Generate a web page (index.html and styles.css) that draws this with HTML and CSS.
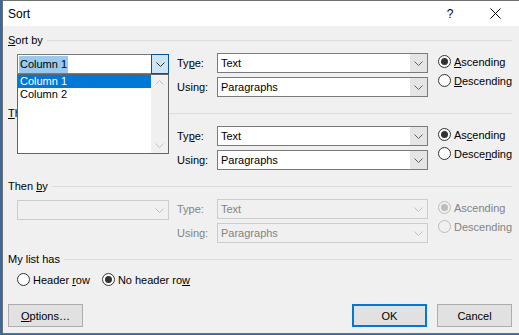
FILE: index.html
```html
<!DOCTYPE html>
<html lang="en">
<head>
    <meta charset="UTF-8">
    <title>Sort</title>
    <link rel="stylesheet" href="styles.css">
</head>
<body>
    <div class="dialog">
        <!-- Title bar -->
        <div class="titlebar">
            <span class="title">Sort</span>
            <span class="tb-btn help">?</span>
            <span class="tb-btn close">
                <svg width="11" height="11" viewBox="0 0 11 11"><path d="M0.5 0.5 L10.5 10.5 M10.5 0.5 L0.5 10.5" stroke="#000" stroke-width="1" fill="none"/></svg>
            </span>
        </div>

        <div class="content">
            <!-- Sort by -->
            <div class="group">
                <div class="group-head"><span><u>S</u>ort by</span><div class="rule"></div></div>
                <div class="group-body">
                    <div class="key">
                        <div class="combo focused">
                            <span class="value"><span class="sel">Column 1</span></span>
                            <span class="arrow">
                                <svg width="9" height="5" viewBox="0 0 9 5"><polyline points="0.5,0.5 4.5,4.5 8.5,0.5" fill="none" stroke="#333" stroke-width="1"/></svg>
                            </span>
                        </div>
                        <div class="droplist">
                            <div class="items">
                                <div class="item selected">Column 1</div>
                                <div class="item">Column 2</div>
                            </div>
                            <div class="scrollbar">
                                <svg width="9" height="5" viewBox="0 0 9 5"><polyline points="0.5,4.5 4.5,0.5 8.5,4.5" fill="none" stroke="#c2c2c2" stroke-width="1"/></svg>
                                <svg width="9" height="5" viewBox="0 0 9 5"><polyline points="0.5,0.5 4.5,4.5 8.5,0.5" fill="none" stroke="#c2c2c2" stroke-width="1"/></svg>
                            </div>
                        </div>
                    </div>
                    <div class="fields">
                        <div class="field">
                            <span class="label">Ty<u>p</u>e:</span>
                            <div class="combo">
                                <span class="value">Text</span>
                                <span class="arrow"><svg width="9" height="5" viewBox="0 0 9 5"><polyline points="0.5,0.5 4.5,4.5 8.5,0.5" fill="none" stroke="#606060" stroke-width="1"/></svg></span>
                            </div>
                        </div>
                        <div class="field">
                            <span class="label">Using:</span>
                            <div class="combo">
                                <span class="value">Paragraphs</span>
                                <span class="arrow"><svg width="9" height="5" viewBox="0 0 9 5"><polyline points="0.5,0.5 4.5,4.5 8.5,0.5" fill="none" stroke="#606060" stroke-width="1"/></svg></span>
                            </div>
                        </div>
                    </div>
                    <div class="order">
                        <label class="radio"><span class="dot checked"></span><span><u>A</u>scending</span></label>
                        <label class="radio"><span class="dot"></span><span><u>D</u>escending</span></label>
                    </div>
                </div>
            </div>

            <!-- Then by -->
            <div class="group">
                <div class="group-head"><span><u>T</u>hen by</span><div class="rule"></div></div>
                <div class="group-body">
                    <div class="key">
                        <div class="combo">
                            <span class="value"></span>
                            <span class="arrow"><svg width="9" height="5" viewBox="0 0 9 5"><polyline points="0.5,0.5 4.5,4.5 8.5,0.5" fill="none" stroke="#606060" stroke-width="1"/></svg></span>
                        </div>
                    </div>
                    <div class="fields">
                        <div class="field">
                            <span class="label">Ty<u>p</u>e:</span>
                            <div class="combo">
                                <span class="value">Text</span>
                                <span class="arrow"><svg width="9" height="5" viewBox="0 0 9 5"><polyline points="0.5,0.5 4.5,4.5 8.5,0.5" fill="none" stroke="#606060" stroke-width="1"/></svg></span>
                            </div>
                        </div>
                        <div class="field">
                            <span class="label">Using:</span>
                            <div class="combo">
                                <span class="value">Paragraphs</span>
                                <span class="arrow"><svg width="9" height="5" viewBox="0 0 9 5"><polyline points="0.5,0.5 4.5,4.5 8.5,0.5" fill="none" stroke="#606060" stroke-width="1"/></svg></span>
                            </div>
                        </div>
                    </div>
                    <div class="order">
                        <label class="radio"><span class="dot checked"></span><span>As<u>c</u>ending</span></label>
                        <label class="radio"><span class="dot"></span><span>Desce<u>n</u>ding</span></label>
                    </div>
                </div>
            </div>

            <!-- Then by (disabled) -->
            <div class="group disabled">
                <div class="group-head"><span>Then <u>b</u>y</span><div class="rule"></div></div>
                <div class="group-body">
                    <div class="key">
                        <div class="combo">
                            <span class="value"></span>
                            <span class="arrow"><svg width="9" height="5" viewBox="0 0 9 5"><polyline points="0.5,0.5 4.5,4.5 8.5,0.5" fill="none" stroke="#bfbfbf" stroke-width="1"/></svg></span>
                        </div>
                    </div>
                    <div class="fields">
                        <div class="field">
                            <span class="label">Type:</span>
                            <div class="combo">
                                <span class="value">Text</span>
                                <span class="arrow"><svg width="9" height="5" viewBox="0 0 9 5"><polyline points="0.5,0.5 4.5,4.5 8.5,0.5" fill="none" stroke="#bfbfbf" stroke-width="1"/></svg></span>
                            </div>
                        </div>
                        <div class="field">
                            <span class="label">Using:</span>
                            <div class="combo">
                                <span class="value">Paragraphs</span>
                                <span class="arrow"><svg width="9" height="5" viewBox="0 0 9 5"><polyline points="0.5,0.5 4.5,4.5 8.5,0.5" fill="none" stroke="#bfbfbf" stroke-width="1"/></svg></span>
                            </div>
                        </div>
                    </div>
                    <div class="order">
                        <label class="radio"><span class="dot checked"></span><span>Ascending</span></label>
                        <label class="radio"><span class="dot"></span><span>Descending</span></label>
                    </div>
                </div>
            </div>

            <!-- My list has -->
            <div class="group">
                <div class="group-head"><span>My list has</span><div class="rule"></div></div>
                <div class="list-has">
                    <label class="radio"><span class="dot"></span><span>Header <u>r</u>ow</span></label>
                    <label class="radio"><span class="dot checked"></span><span>No header ro<u>w</u></span></label>
                </div>
            </div>

            <div class="footer">
                <div class="button"><span><u>O</u>ptions…</span></div>
                <div class="spacer"></div>
                <div class="button default">OK</div>
                <div class="button">Cancel</div>
            </div>
        </div>
    </div>
</body>
</html>
```

FILE: styles.css
```css
* {
    box-sizing: border-box;
}
body {
    margin: 0;
    background-color: #3b6a9a;
    font-family: "Liberation Sans", Arial, sans-serif;
    font-size: 11px;
    color: #000;
}
u {
    text-underline-offset: 1px;
}
.dialog {
    margin-left: 2px;
    width: 517px;
    height: 334px;
    background-color: #f0f0f0;
    border: 1px solid #6f6f6f;
    border-right: none;
    position: relative;
}
.titlebar {
    height: 25px;
    background-color: #fff;
    display: flex;
    align-items: center;
    padding-left: 5px;
}
.title {
    font-size: 12px;
    flex: 1;
}
.tb-btn {
    height: 25px;
    display: flex;
    align-items: center;
    justify-content: center;
    font-size: 12px;
}
.help {
    width: 44px;
}
.close {
    width: 47px;
}
.content {
    padding: 7px 7px 0 5px;
}
.group-head {
    display: flex;
    align-items: center;
    height: 14px;
}
.rule {
    flex: 1;
    height: 1px;
    background-color: #dcdcdc;
    margin-left: 4px;
}
.group + .group {
    margin-top: 9px;
}
.group-body {
    display: flex;
    align-items: flex-start;
    margin-top: 6px;
    padding-left: 9px;
}
.key {
    width: 152px;
    position: relative;
    margin-right: 8px;
}
.key .combo {
    width: 152px;
    margin-top: 1px;
}
.fields {
    display: flex;
    flex-direction: column;
    gap: 4px;
}
.field {
    display: flex;
    align-items: center;
}
.label {
    width: 40px;
}
.combo {
    width: 211px;
    height: 20px;
    display: flex;
    background-color: #fff;
    border: 1px solid #7a7a7a;
}
.combo .value {
    flex: 1;
    display: flex;
    align-items: center;
    padding-left: 3px;
    white-space: nowrap;
}
.combo .arrow {
    width: 17px;
    display: flex;
    align-items: center;
    justify-content: center;
    background-color: #e5e5e5;
}
.combo.focused .value {
    padding-left: 1px;
}
.sel {
    background-color: #99c9ef;
    padding: 2px 1px 3px 1px;
}
.combo.focused .arrow {
    background-color: #cce4f7;
    border: 1px solid #005499;
    margin: -1px -1px -1px 0;
    width: 18px;
}
.droplist {
    position: absolute;
    top: 21px;
    left: 0;
    width: 152px;
    height: 80px;
    background-color: #fff;
    border: 1px solid #646464;
    display: flex;
    z-index: 2;
}
.items {
    flex: 1;
}
.item {
    height: 13px;
    line-height: 13px;
    padding-left: 2px;
}
.item.selected {
    background-color: #0078d7;
    color: #fff;
}
.scrollbar {
    width: 17px;
    background-color: #f0f0f0;
    display: flex;
    flex-direction: column;
    align-items: center;
    justify-content: space-between;
    padding: 5px 0 5px 0;
}
.order {
    display: flex;
    flex-direction: column;
    margin-top: -1px;
    margin-left: 10px;
}
.radio {
    display: flex;
    align-items: center;
    height: 19px;
    gap: 3px;
}
.dot {
    width: 13px;
    height: 13px;
    border-radius: 50%;
    border: 1px solid #333;
    background-color: #fff;
    display: flex;
    align-items: center;
    justify-content: center;
}
.dot.checked::after {
    content: "";
    width: 7px;
    height: 7px;
    border-radius: 50%;
    background-color: #333;
}
.disabled .group-body {
    color: #838383;
}
.disabled .combo {
    background-color: #f0f0f0;
    border-color: #cccccc;
}
.disabled .combo .arrow {
    background-color: #f0f0f0;
}
.disabled .dot {
    border-color: #bcbcbc;
    background-color: #f0f0f0;
}
.disabled .dot.checked::after {
    background-color: #bcbcbc;
}
.list-has {
    display: flex;
    gap: 12px;
    margin-top: 4px;
    padding-left: 9px;
}
.footer {
    display: flex;
    gap: 10px;
    margin-top: 15px;
}
.spacer {
    flex: 1;
}
.button {
    width: 75px;
    height: 23px;
    background-color: #e1e1e1;
    border: 1px solid #adadad;
    display: flex;
    align-items: center;
    justify-content: center;
}
.button.default {
    border: 2px solid #0078d7;
}
```
